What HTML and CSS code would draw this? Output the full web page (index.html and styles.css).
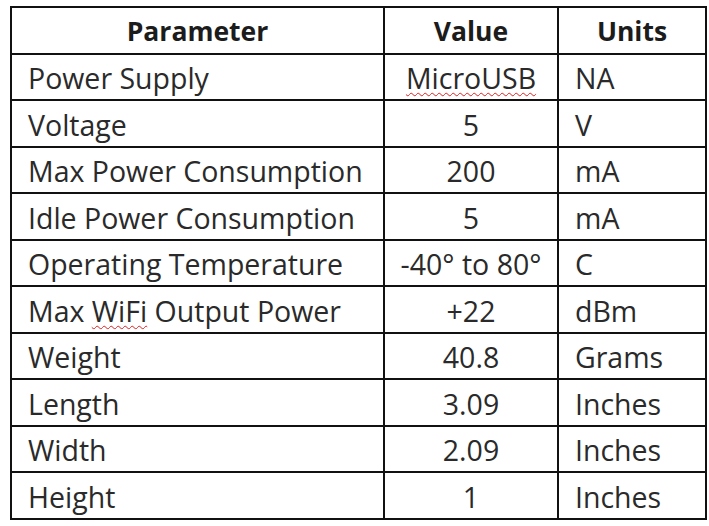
FILE: index.html
```html
<!DOCTYPE html>
<html>
<head>
<meta charset="utf-8">
<link rel="stylesheet" href="styles.css">
</head>
<body>
<table class="spec">
  <colgroup>
    <col class="c-param">
    <col class="c-value">
    <col class="c-units">
  </colgroup>
  <thead>
    <tr><th>Parameter</th><th>Value</th><th>Units</th></tr>
  </thead>
  <tbody>
    <tr><td>Power Supply</td><td class="val"><span class="spell">MicroUSB</span></td><td>NA</td></tr>
    <tr><td>Voltage</td><td class="val">5</td><td>V</td></tr>
    <tr><td>Max Power Consumption</td><td class="val">200</td><td>mA</td></tr>
    <tr><td>Idle Power Consumption</td><td class="val">5</td><td>mA</td></tr>
    <tr><td>Operating Temperature</td><td class="val">-40° to 80°</td><td>C</td></tr>
    <tr><td>Max <span class="spell">WiFi</span> Output Power</td><td class="val">+22</td><td>dBm</td></tr>
    <tr><td>Weight</td><td class="val">40.8</td><td>Grams</td></tr>
    <tr><td>Length</td><td class="val">3.09</td><td>Inches</td></tr>
    <tr><td>Width</td><td class="val">2.09</td><td>Inches</td></tr>
    <tr><td>Height</td><td class="val">1</td><td>Inches</td></tr>
  </tbody>
</table>
</body>
</html>
```
FILE: styles.css
```css
html, body {
  margin: 0;
  padding: 0;
  background: #ffffff;
}
body {
  padding: 6px 0 0 10px;
  font-family: "Open Sans", Lato, sans-serif;
  color: #2a2a2a;
}
.spec {
  border-collapse: collapse;
  table-layout: fixed;
  width: 695px;
  font-size: 28.5px;
}
.c-param { width: 373px; }
.c-value { width: 174px; }
.c-units { width: 148px; }
.spec th, .spec td {
  border: 2px solid #111111;
  height: 46.5px;
  padding: 3px 0 0 16px;
  box-sizing: border-box;
  text-align: left;
  vertical-align: middle;
  line-height: 1;
  white-space: nowrap;
}
.spec th {
  font-weight: 700;
  font-size: 26.5px;
  text-align: center;
  padding: 2px 0 0 0;
  color: #1c1c1c;
}
.spec td.val {
  text-align: center;
  padding: 3px 0 0 0;
}
.spell {
  text-decoration: underline wavy #e02020;
  text-decoration-thickness: 1px;
  text-underline-offset: 3px;
}
```
